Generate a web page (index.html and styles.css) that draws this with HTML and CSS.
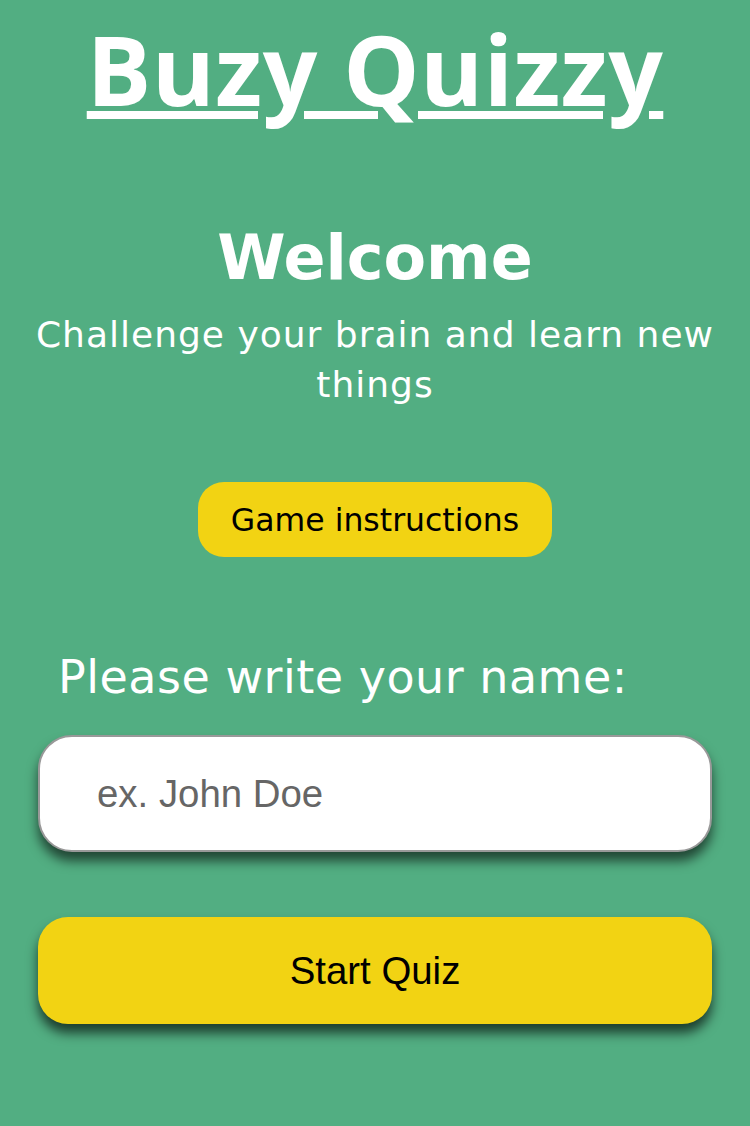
FILE: index.html
```html
<!DOCTYPE html>
<html lang="en">
<head>
<meta charset="utf-8">
<title>Buzy Quizzy</title>
<link rel="stylesheet" href="styles.css">
</head>
<body>
<main class="page">
  <h1 class="title">Buzy Quizzy</h1>
  <section class="intro">
    <h2 class="welcome">Welcome</h2>
    <p class="tagline">Challenge your brain and learn new things</p>
  </section>
  <button class="instructions" type="button">Game instructions</button>
  <form class="name-form">
    <label class="name-label" for="username">Please write your name:</label>
    <input class="name-input" id="username" type="text" placeholder="ex. John Doe">
    <button class="start" type="button">Start Quiz</button>
  </form>
</main>
</body>
</html>
```
FILE: styles.css
```css
html, body {
  margin: 0;
  padding: 0;
}

body {
  background: #52ae82;
  font-family: "DejaVu Sans", "Open Sans", sans-serif;
  color: #ffffff;
  min-height: 1126px;
}

.page {
  display: flex;
  flex-direction: column;
  align-items: center;
}

.title {
  margin: 14px 0 0;
  font-family: "Open Sans", "DejaVu Sans", sans-serif;
  font-size: 96px;
  font-weight: 700;
  font-style: normal;
  line-height: 110px;
  letter-spacing: 0.5px;
  text-decoration: underline;
  text-decoration-thickness: 8px;
  text-underline-offset: 5px;
}

.intro {
  margin-top: 99px;
  display: flex;
  flex-direction: column;
  align-items: center;
  text-align: center;
  padding: 0 20px;
}

.welcome {
  margin: 0;
  font-size: 62px;
  font-weight: 700;
  line-height: 70px;
}

.tagline {
  margin: 17px 0 0;
  font-size: 36px;
  font-weight: 400;
  line-height: 50px;
  letter-spacing: 1px;
}

.instructions {
  margin-top: 72px;
  width: 354px;
  height: 75px;
  border: none;
  border-radius: 26px;
  background: #f2d313;
  color: #000000;
  font-family: "DejaVu Sans", "Open Sans", sans-serif;
  font-size: 31.5px;
  font-weight: 400;
  padding: 0;
}

.name-form {
  margin-top: 90px;
  width: 674px;
  display: flex;
  flex-direction: column;
}

.name-label {
  padding-left: 20px;
  font-size: 46px;
  line-height: 60px;
  font-weight: 400;
  letter-spacing: 0.5px;
}

.name-input {
  box-sizing: border-box;
  margin-top: 28px;
  width: 674px;
  height: 117px;
  border: 2px solid #999999;
  border-radius: 34px;
  background: #ffffff;
  padding: 0 0 0 57px;
  font-family: "Liberation Sans", Arial, sans-serif;
  font-size: 38.4px;
  color: #000;
  box-shadow: 0 9px 12px rgba(0, 0, 0, 0.6);
  outline: none;
}

.name-input::placeholder {
  color: #666666;
}

.start {
  margin-top: 65px;
  width: 674px;
  height: 107px;
  border: none;
  border-radius: 30px;
  background: #f2d313;
  color: #000000;
  font-family: "Liberation Sans", Arial, sans-serif;
  font-size: 38.4px;
  box-shadow: 0 9px 12px rgba(0, 0, 0, 0.65);
  padding: 0;
}
```
